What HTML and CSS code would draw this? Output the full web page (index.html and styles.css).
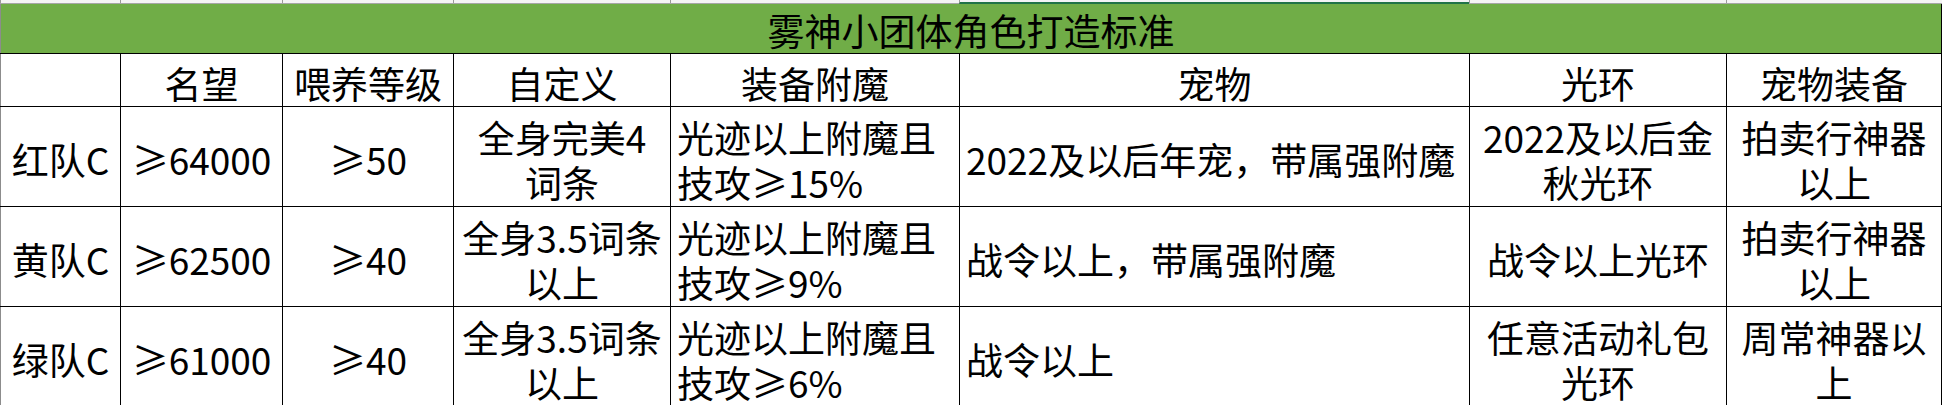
FILE: index.html
```html
<!DOCTYPE html>
<html lang="zh-CN">
<head>
<meta charset="utf-8">
<title>雾神小团体角色打造标准</title>
<link rel="stylesheet" href="styles.css">
</head>
<body>
<div class="strip">
  <div class="sc c1"></div><div class="sc c2"></div><div class="sc c3"></div><div class="sc c4"></div>
  <div class="sc c5"></div><div class="sc c6 sel"></div><div class="sc c7"></div><div class="sc c8"></div>
</div>
<table class="sheet">
  <colgroup>
    <col class="w1"><col class="w2"><col class="w3"><col class="w4">
    <col class="w5"><col class="w6"><col class="w7"><col class="w8">
  </colgroup>
  <tr class="title"><td colspan="8">雾神小团体角色打造标准</td></tr>
  <tr class="head">
    <td></td><td>名望</td><td>喂养等级</td><td>自定义</td><td>装备附魔</td><td>宠物</td><td>光环</td><td>宠物装备</td>
  </tr>
  <tr class="row">
    <td>红队C</td><td>≥64000</td><td>≥50</td><td>全身完美4<br>词条</td>
    <td class="left">光迹以上附魔且<br>技攻≥15%</td>
    <td class="left">2022及以后年宠，带属强附魔</td>
    <td>2022及以后金<br>秋光环</td><td>拍卖行神器<br>以上</td>
  </tr>
  <tr class="row">
    <td>黄队C</td><td>≥62500</td><td>≥40</td><td>全身3.5词条<br>以上</td>
    <td class="left">光迹以上附魔且<br>技攻≥9%</td>
    <td class="left">战令以上，带属强附魔</td>
    <td>战令以上光环</td><td>拍卖行神器<br>以上</td>
  </tr>
  <tr class="row">
    <td>绿队C</td><td>≥61000</td><td>≥40</td><td>全身3.5词条<br>以上</td>
    <td class="left">光迹以上附魔且<br>技攻≥6%</td>
    <td class="left">战令以上</td>
    <td>任意活动礼包<br>光环</td><td>周常神器以<br>上</td>
  </tr>
</table>
</body>
</html>
```
FILE: styles.css
```css
html, body {
  margin: 0;
  padding: 0;
  background: #ffffff;
}
body {
  width: 1942px;
  height: 405px;
  overflow: hidden;
  font-family: "Noto Sans CJK SC", "Noto Sans", sans-serif;
  color: #000;
}
.strip {
  display: grid;
  grid-template-columns: 120px 162px 171px 217px 289px 510px 257px 215px;
  height: 4px;
  box-sizing: border-box;
  border-bottom: 1px solid #a6a6a6;
  background: #f4f4f4;
}
.sc {
  border-left: 1px solid #9a9a9a;
}
.sc.sel {
  border-bottom: 2px solid #217346;
  margin-bottom: -1px;
}
.sheet {
  border-collapse: collapse;
  table-layout: fixed;
  width: 1941px;
}
.w1 { width: 120px; }
.w2 { width: 162px; }
.w3 { width: 171px; }
.w4 { width: 217px; }
.w5 { width: 289px; }
.w6 { width: 510px; }
.w7 { width: 257px; }
.w8 { width: 215px; }
.sheet td {
  border: 1px solid #000;
  padding: 6px 0 0 0;
  text-align: center;
  vertical-align: middle;
  font-size: 37px;
  line-height: 45px;
  white-space: nowrap;
}
.sheet td.left {
  text-align: left;
  padding-left: 6px;
}
.sheet tr > td:first-child {
  border-left-color: #8c8c8c;
}
.title td {
  background: #70ad47;
  height: 43px;
  border-top: none;
  padding-top: 4px;
}
.head td {
  height: 46px;
}
.row td {
  height: 93px;
}
```
